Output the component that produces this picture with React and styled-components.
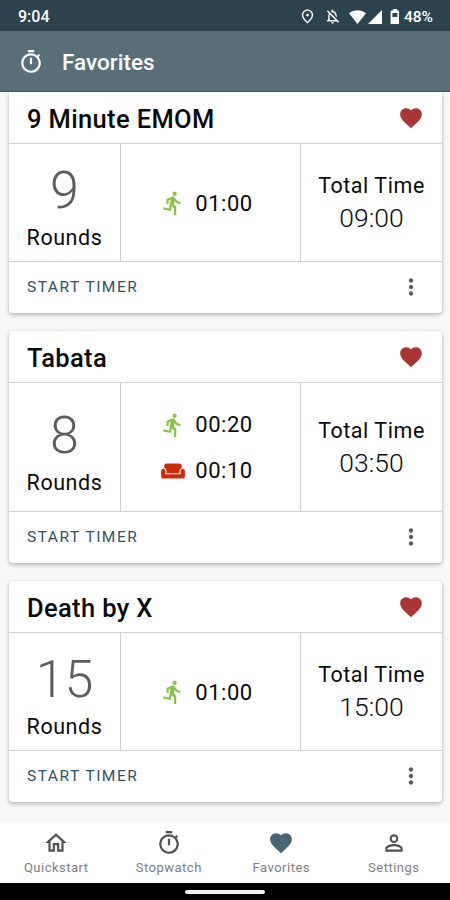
import React from "react";
import styled, { createGlobalStyle } from "styled-components";
import {
  MdDirectionsRun,
  MdFavorite,
  MdMoreVert,
  MdOutlineHome,
  MdOutlineNotificationsOff,
  MdOutlinePlace,
  MdOutlineTimer,
  MdPersonOutline,
  MdWeekend,
} from "react-icons/md";

const timers = [
  { id: 1, name: "9 Minute EMOM", rounds: 9, work: "01:00", total: "09:00" },
  { id: 2, name: "Tabata", rounds: 8, work: "00:20", rest: "00:10", total: "03:50" },
  { id: 3, name: "Death by X", rounds: 15, work: "01:00", total: "15:00" },
];

const tabs = [
  { label: "Quickstart", icon: MdOutlineHome },
  { label: "Stopwatch", icon: MdOutlineTimer },
  { label: "Favorites", icon: MdFavorite, active: true },
  { label: "Settings", icon: MdPersonOutline },
];

const TimerCard = ({ timer }) => (
  <Card>
    <CardHeader>
      <CardTitle>{timer.name}</CardTitle>
      <MdFavorite size={26} color="#a93632" />
    </CardHeader>
    <CardBody $tall={Boolean(timer.rest)}>
      <Rounds>
        <RoundCount>{timer.rounds}</RoundCount>
        <Label>Rounds</Label>
      </Rounds>
      <Intervals>
        <Interval>
          <MdDirectionsRun size={26} color="#8bc34a" />
          <Duration>{timer.work}</Duration>
        </Interval>
        {timer.rest && (
          <Interval>
            <MdWeekend size={26} color="#cc2a08" />
            <Duration>{timer.rest}</Duration>
          </Interval>
        )}
      </Intervals>
      <Total>
        <Label>Total Time</Label>
        <TotalValue>{timer.total}</TotalValue>
      </Total>
    </CardBody>
    <CardFooter>
      <StartButton>START TIMER</StartButton>
      <MdMoreVert size={26} color="#5c5c5c" />
    </CardFooter>
  </Card>
);

const App = () => (
  <Screen>
    <GlobalStyle />
    <StatusBar>
      <Clock>9:04</Clock>
      <StatusIcons>
        <MdOutlinePlace size={17} />
        <MdOutlineNotificationsOff size={17} />
        {/* wifi + cell signal */}
        <svg width="33" height="16" viewBox="0 0 33 16" fill="#fff">
          <path d="M0 4.2C5 .1 12 .1 17 4.2L8.5 15z" />
          <path d="M33 1v14H19z" />
        </svg>
        <svg width="10" height="16" viewBox="0 0 10 16" fill="#fff">
          <path
            fillRule="evenodd"
            d="M3 0h4v1.5h1.2c.5 0 .8.3.8.8v12c0 .5-.3.8-.8.8H1.4c-.5 0-.8-.3-.8-.8v-12c0-.5.3-.8.8-.8H3zM2.4 4v4h5V4z"
          />
        </svg>
      </StatusIcons>
      <Battery>48%</Battery>
    </StatusBar>
    <AppBar>
      <MdOutlineTimer size={26} />
      <AppTitle>Favorites</AppTitle>
    </AppBar>
    <List>
      {timers.map((t) => (
        <TimerCard key={t.id} timer={t} />
      ))}
    </List>
    <TabBar>
      {tabs.map(({ label, icon: Icon, active }) => (
        <Tab key={label} $active={active}>
          <Icon size={26} />
          <TabLabel>{label}</TabLabel>
        </Tab>
      ))}
    </TabBar>
    <GestureBar>
      <GestureHandle />
    </GestureBar>
  </Screen>
);

const GlobalStyle = createGlobalStyle`
  * {
    box-sizing: border-box;
  }

  body {
    margin: 0;
    font-family: Roboto, "Liberation Sans", sans-serif;
    color: #0a0a0a;
  }

  svg {
    display: block;
    flex-shrink: 0;
  }
`;

const Screen = styled.div`
  display: flex;
  flex-direction: column;
  width: 450px;
  height: 900px;
  overflow: hidden;
  background: #f8f8f8;
`;

const StatusBar = styled.header`
  display: flex;
  align-items: center;
  height: 31px;
  flex-shrink: 0;
  padding: 2px 17px 0 18px;
  background: #2b424f;
  color: #fff;
`;

const Clock = styled.span`
  flex: 1;
  font-size: 16px;
  font-weight: 500;
`;

const StatusIcons = styled.div`
  display: flex;
  align-items: center;
  gap: 8px;
  margin-right: 4px;
`;

const Battery = styled.span`
  font-size: 15.5px;
  font-weight: 500;
`;

const AppBar = styled.div`
  display: flex;
  align-items: center;
  height: 61px;
  flex-shrink: 0;
  padding: 2px 18px 0;
  gap: 18px;
  background: #566f7b;
  border-bottom: 1px solid #3c596a;
  color: #fff;
`;

const AppTitle = styled.h1`
  margin: 0;
  font-size: 22.5px;
  font-weight: 500;
`;

const List = styled.main`
  flex: 1;
  min-height: 0;
  overflow: hidden;
  display: flex;
  flex-direction: column;
  gap: 18px;
  padding: 0 8px 0 9px;
`;

const Card = styled.section`
  flex-shrink: 0;
  border-radius: 4px;
  background: #fff;
  box-shadow: 0 2px 4px rgba(0, 0, 0, 0.26), 0 0 2px rgba(0, 0, 0, 0.1);

  &:first-child {
    border-top-left-radius: 0;
    border-top-right-radius: 0;
  }
`;

const CardHeader = styled.div`
  display: flex;
  align-items: center;
  justify-content: space-between;
  height: 51px;
  padding: 0 18px;
`;

const CardTitle = styled.h2`
  margin: 0;
  padding-top: 3px;
  font-size: 25.5px;
  font-weight: 500;
  letter-spacing: 0.35px;
`;

const CardBody = styled.div`
  display: grid;
  grid-template-columns: 112px 180px 1fr;
  height: ${({ $tall }) => ($tall ? 130 : 119)}px;
  border-top: 1px solid #d0d0d0;
  border-bottom: 1px solid #d0d0d0;
`;

const Cell = styled.div`
  display: flex;
  flex-direction: column;
  align-items: center;
  justify-content: center;
`;

const Rounds = styled(Cell)`
  padding-top: 9px;
  border-right: 1px solid #cfcfcf;
`;

const Intervals = styled(Cell)`
  gap: 20px;
  padding: 1px 8px 0 0;
  border-right: 1px solid #cfcfcf;
`;

const Total = styled(Cell)`
  padding-bottom: 1px;
`;

const Interval = styled.div`
  display: flex;
  align-items: center;
  gap: 9px;
  height: 26px;
`;

const RoundCount = styled.span`
  font-size: 52px;
  font-weight: 300;
  line-height: 62px;
  color: #5c5c5c;
`;

const Label = styled.span`
  font-size: 21.5px;
  line-height: 32px;
  letter-spacing: 0.55px;
`;

const Duration = styled(Label)`
  padding-top: 1px;
  font-size: 22px;
`;

const TotalValue = styled.span`
  font-size: 26.5px;
  font-weight: 300;
  line-height: 32px;
`;

const CardFooter = styled.div`
  display: flex;
  align-items: center;
  justify-content: space-between;
  height: 51px;
  padding: 0 18px 1px;
`;

const StartButton = styled.button`
  padding: 0;
  border: 0;
  background: none;
  font: 400 15.5px Roboto, "Liberation Sans", sans-serif;
  letter-spacing: 1.5px;
  color: #2f5263;
`;

const TabBar = styled.nav`
  display: flex;
  height: 61px;
  flex-shrink: 0;
  background: #fff;
`;

const Tab = styled.div`
  flex: 1;
  display: flex;
  flex-direction: column;
  align-items: center;
  padding-top: 8px;
  color: ${({ $active }) => ($active ? "#486475" : "#505050")};
`;

const TabLabel = styled.span`
  margin-top: 4px;
  font-size: 13px;
  line-height: 16px;
  letter-spacing: 0.5px;
  color: #7d7d7d;
`;

const GestureBar = styled.div`
  display: flex;
  justify-content: center;
  align-items: center;
  height: 17px;
  flex-shrink: 0;
  background: #000;
`;

const GestureHandle = styled.div`
  width: 80px;
  height: 4px;
  margin-top: 1px;
  border-radius: 2px;
  background: #f2f2f2;
`;

export default App;
